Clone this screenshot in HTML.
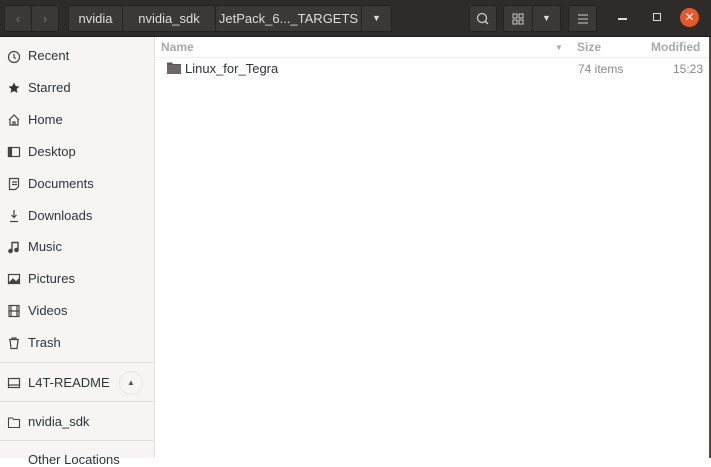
<!DOCTYPE html>
<html><head><style>
*{margin:0;padding:0;box-sizing:border-box}
body{width:711px;height:458px;overflow:hidden;background:#fff;font-family:"Liberation Sans",sans-serif;position:relative}
.hdr{position:absolute;left:0;top:0;width:711px;height:37px;background:#2e2c29;border-bottom:1px solid #1c1b19}
.btn{position:absolute;top:5px;height:27px;background:#3b3935;border:1px solid #252320;border-radius:3px;color:#ddd;font-size:13px;line-height:25px;text-align:center}
.sb{position:absolute;left:0;top:37px;width:155px;height:421px;background:#f6f5f4;border-right:1px solid #e2e0de}
.it{position:absolute;left:28px;font-size:13px;color:#2e3436}
.ic{position:absolute;left:7px;width:14px;height:14px}
.sep{position:absolute;left:0;width:155px;height:1px;background:#e0dedc}
.col{position:absolute;top:40px;font-size:12px;font-weight:bold;color:#a8a8a8}
</style></head><body>
<div class="hdr">
 <div class="btn" style="left:4px;width:28px;color:#777">&#x2039;</div>
 <div class="btn" style="left:31px;width:28px;color:#777">&#x203A;</div>
 <div class="btn" style="left:68px;width:55px">nvidia</div>
 <div class="btn" style="left:122px;width:94px">nvidia_sdk</div>
 <div class="btn" style="left:215px;width:147px">JetPack_6..._TARGETS</div>
 <div class="btn" style="left:361px;width:31px;font-size:9px">&#9660;</div>
 <div class="btn" style="left:469px;width:28px"><svg width="14" height="14" style="margin-top:6px"><circle cx="6" cy="6" r="4.5" fill="none" stroke="#ccc" stroke-width="1.3"/><path d="M9 9l3 3" stroke="#ccc" stroke-width="1.5"/></svg></div>
 <div class="btn" style="left:503px;width:30px"><svg width="12" height="12" style="margin-top:7px" fill="none" stroke="#ccc"><rect x="1" y="1" width="4" height="4"/><rect x="7" y="1" width="4" height="4"/><rect x="1" y="7" width="4" height="4"/><rect x="7" y="7" width="4" height="4"/></svg></div>
 <div class="btn" style="left:532px;width:29px;font-size:9px">&#9660;</div>
 <div class="btn" style="left:568px;width:29px"><svg width="12" height="10" style="margin-top:8px" stroke="#ccc"><path d="M1 1h10M1 5h10M1 9h10"/></svg></div>
 <div style="position:absolute;left:618px;top:18px;width:9px;height:1.5px;background:#ddd"></div>
 <div style="position:absolute;left:653px;top:13px;width:8px;height:8px;border:1.3px solid #ddd"></div>
 <div style="position:absolute;left:680px;top:8px;width:19px;height:19px;border-radius:50%;background:#e4582b;color:#fff;font-size:12px;line-height:19px;text-align:center">&#x2715;</div>
</div>
<div class="sb">
 <svg class="ic" style="top:13px" fill="none" stroke="#444" stroke-width="1.2"><circle cx="7" cy="7" r="5.5"/><path d="M7 4v3.5l2 1"/></svg><div class="it" style="top:11px">Recent</div>
 <svg class="ic" style="top:44px"><path d="M7 1.5l1.7 3.6 3.8.4-2.9 2.6.9 3.8L7 10l-3.5 1.9.9-3.8L1.5 5.5l3.8-.4z" fill="#333"/></svg><div class="it" style="top:43px">Starred</div>
 <svg class="ic" style="top:76px" fill="none" stroke="#444" stroke-width="1.2"><path d="M2 7L7 2l5 5M3 6v6h8V6M6 12V9h2v3"/></svg><div class="it" style="top:75px">Home</div>
 <svg class="ic" style="top:108px" fill="none" stroke="#444" stroke-width="1.2"><rect x="1.5" y="2.5" width="11" height="9"/><rect x="1.5" y="2.5" width="3" height="9" fill="#444"/></svg><div class="it" style="top:107px">Desktop</div>
 <svg class="ic" style="top:140px" fill="none" stroke="#444" stroke-width="1.2"><path d="M2.5 1.5h9v8l-3 3h-6z M5 5h5M5 7.5h5"/></svg><div class="it" style="top:139px">Documents</div>
 <svg class="ic" style="top:172px" fill="none" stroke="#444" stroke-width="1.2"><path d="M7 1v7M4.5 6L7 8.5 9.5 6M3 12.5h8"/></svg><div class="it" style="top:171px">Downloads</div>
 <svg class="ic" style="top:203px" fill="none" stroke="#444" stroke-width="1.4"><path d="M5 11V2.5h6V10"/><circle cx="3.5" cy="11" r="1.6" fill="#444"/><circle cx="9.5" cy="10" r="1.6" fill="#444"/></svg><div class="it" style="top:202px">Music</div>
 <svg class="ic" style="top:235px" fill="none" stroke="#444" stroke-width="1.2"><rect x="1.5" y="2.5" width="11" height="9"/><path d="M2 11l4-4 3 3 3-3v4z" fill="#444"/></svg><div class="it" style="top:234px">Pictures</div>
 <svg class="ic" style="top:267px" fill="none" stroke="#444" stroke-width="1.2"><rect x="2" y="1.5" width="10" height="11"/><path d="M2 7h10M4 1.5v11M10 1.5v11"/></svg><div class="it" style="top:266px">Videos</div>
 <svg class="ic" style="top:299px" fill="none" stroke="#444" stroke-width="1.2"><path d="M2 3.5h10M5 3.5V2h4v1.5M3 3.5l1 9h6l1-9"/></svg><div class="it" style="top:298px">Trash</div>
 <div class="sep" style="top:325px"></div>
 <svg class="ic" style="top:339px" fill="none" stroke="#444" stroke-width="1.2"><rect x="1.5" y="2.5" width="11" height="9"/><path d="M1.5 9h11"/></svg><div class="it" style="top:338px">L4T-README</div>
 <div style="position:absolute;left:119px;top:334px;width:24px;height:24px;border-radius:50%;border:1px solid #e6e4e2;font-size:8px;text-align:center;line-height:22px;color:#555">&#9650;</div>
 <div class="sep" style="top:364px"></div>
 <svg class="ic" style="top:378px" fill="none" stroke="#444" stroke-width="1.1"><path d="M1.5 3h4l1 1.5h6v8h-11z"/></svg><div class="it" style="top:377px">nvidia_sdk</div>
 <div class="sep" style="top:403px"></div>
 <div class="it" style="top:415px">Other Locations</div>
</div>
<div class="col" style="left:161px">Name</div>
<div style="position:absolute;left:555px;top:43px;font-size:8px;color:#aaa">&#9660;</div>
<div class="col" style="left:577px">Size</div>
<div class="col" style="left:651px">Modified</div>
<div style="position:absolute;left:156px;top:57px;width:553px;height:1px;background:#f0efee"></div>
<svg style="position:absolute;left:167px;top:61px" width="14" height="13"><path d="M0 1.5h5l1 1.5h8v10H0z" fill="#5d5456"/><rect x="0" y="4" width="14" height="9" fill="#6e6567"/></svg>
<div style="position:absolute;left:185px;top:61px;font-size:13px;color:#2e3436">Linux_for_Tegra</div>
<div style="position:absolute;left:578px;top:62px;font-size:12px;color:#888">74 items</div>
<div style="position:absolute;left:673px;top:62px;font-size:12px;color:#888">15:23</div>
<div style="position:absolute;left:709px;top:37px;width:2px;height:421px;background:#5a4a3a"></div>
</body></html>
